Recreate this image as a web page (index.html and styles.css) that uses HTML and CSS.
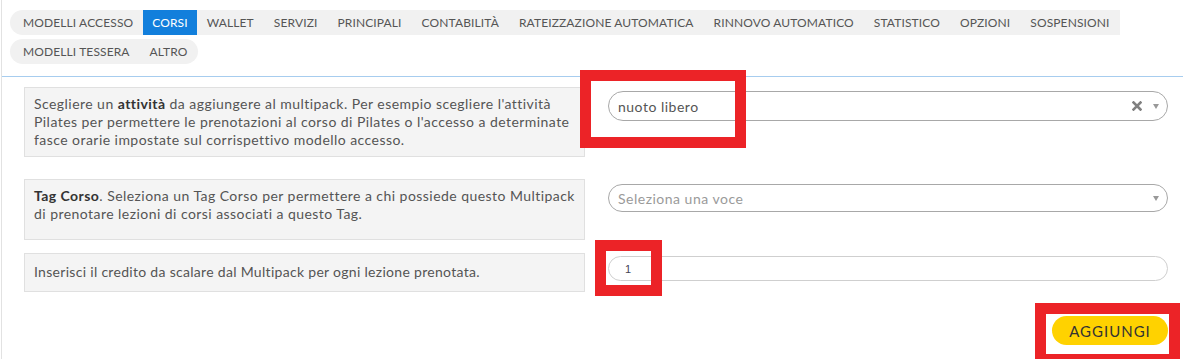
FILE: index.html
```html
<!DOCTYPE html>
<html lang="it">
<head>
  <meta charset="UTF-8">
  <title>Multipack - Corsi</title>
  <link rel="stylesheet" href="styles.css">
</head>
<body>

<div class="page">
  <ul class="tabs">
    <li class="round-left">Modelli accesso</li>
    <li class="active">Corsi</li>
    <li>Wallet</li>
    <li>Servizi</li>
    <li>Principali</li>
    <li>Contabilità</li>
    <li>Rateizzazione automatica</li>
    <li>Rinnovo automatico</li>
    <li>Statistico</li>
    <li>Opzioni</li>
    <li>Sospensioni</li>
    <li class="round-left">Modelli tessera</li>
    <li class="round-right">Altro</li>
  </ul>

  <div class="panel">
    <!-- attività -->
    <div class="form-row">
      <div class="help">
        Scegliere un <b>attività</b> da aggiungere al multipack. Per esempio scegliere l'attività
        Pilates per permettere le prenotazioni al corso di Pilates o l'accesso a determinate
        fasce orarie impostate sul corrispettivo modello accesso.
      </div>
      <div class="select">
        <span class="value">nuoto libero</span>
        <svg class="clear" width="10" height="10" viewBox="0 0 10 10"><path d="M1.5 1.5 L8.5 8.5 M8.5 1.5 L1.5 8.5" stroke="#808080" stroke-width="2.6" stroke-linecap="square"/></svg>
        <span class="caret"></span>
      </div>
    </div>

    <!-- tag corso -->
    <div class="form-row tag-row">
      <div class="help tall">
        <b>Tag Corso</b>. Seleziona un Tag Corso per permettere a chi possiede questo Multipack
        di prenotare lezioni di corsi associati a questo Tag.
      </div>
      <div class="select">
        <span class="placeholder">Seleziona una voce</span>
        <span class="caret"></span>
      </div>
    </div>

    <!-- credito -->
    <div class="form-row credit-row">
      <div class="help single">Inserisci il credito da scalare dal Multipack per ogni lezione prenotata.</div>
      <div class="input"><span>1</span></div>
    </div>

    <div class="actions">
      <button class="btn-add">AGGIUNGI</button>
    </div>
  </div>
</div>

<div class="mark mark-activity"></div>
<div class="mark mark-credit"></div>
<div class="mark mark-button"></div>

</body>
</html>
```

FILE: styles.css
```css
body { margin: 0; padding: 0; background: #fff; font-family: "Lato", "Liberation Sans", sans-serif; color: #555; position: relative; height: 359px; overflow: hidden; }
.page { margin-left: 1px; border-left: 1px solid #e2e2e2; min-height: 359px; padding-top: 10px; box-sizing: border-box; }

.tabs { list-style: none; margin: 0 0 12px 8px; padding: 0; display: flex; flex-wrap: wrap; row-gap: 4px; max-width: 1122px; }
.tabs li { background: #f1f1f1; height: 25px; line-height: 25px; padding: 0 10px; font-size: 12px; letter-spacing: 0.12px; text-transform: uppercase; color: #555; cursor: pointer; }
.tabs li.active { background: #127fdc; color: #fff; padding: 0 9px; }
.tabs li.round-left { border-radius: 13px 0 0 13px; padding-left: 13px; }
.tabs li.round-right { border-radius: 0 13px 13px 0; }

.panel { border-top: 1px solid #a7cdef; padding: 10px 15px 0 22px; }
.form-row { display: grid; grid-template-columns: 561px 1fr; column-gap: 23px; align-items: start; }
.tag-row { margin-top: 22px; }
.credit-row { margin-top: 13px; }

.help { background: #f4f4f4; border: 1px solid #e0e0e0; padding: 7px 4px 7px 9px; font-size: 14px; line-height: 18px; letter-spacing: 0.45px; }
.help.tall { padding-bottom: 16px; }
.help.single { padding: 9px 4px 10px 9px; letter-spacing: 0.3px; }
.help b { color: #333; }

.select { margin-top: 4px; height: 28px; border: 1px solid #a8a8a8; border-radius: 15px; display: flex; align-items: center; padding: 0 8px 0 9px; font-size: 14px; letter-spacing: 0.5px; }
.tag-row .select { margin-top: 5px; height: 26px; }
.select .value { flex: 1; color: #555; }
.select .placeholder { flex: 1; color: #9a9a9a; }
.select .clear { margin-right: 11px; }
.caret { width: 0; height: 0; border-left: 3px solid transparent; border-right: 3px solid transparent; border-top: 5px solid #999; }

.input { margin-top: 3px; height: 23px; border: 1px solid #cfcfcf; border-radius: 13px; display: flex; align-items: center; padding-left: 16px; font-family: "Liberation Sans", sans-serif; font-size: 11px; color: #445; }

.actions { display: flex; justify-content: flex-end; margin-top: 24px; }
.btn-add { background: #ffd200; border: none; border-radius: 15px; width: 116px; height: 29px; font-family: "Lato", sans-serif; font-size: 15px; letter-spacing: 1px; color: #333; padding: 0; }

.mark { position: absolute; border: 11px solid #ec2327; box-sizing: border-box; }
.mark-activity { left: 580px; top: 70px; width: 166px; height: 78px; }
.mark-credit { left: 595px; top: 240px; width: 67px; height: 56px; }
.mark-button { left: 1035px; top: 303px; width: 145px; height: 62px; }
```
